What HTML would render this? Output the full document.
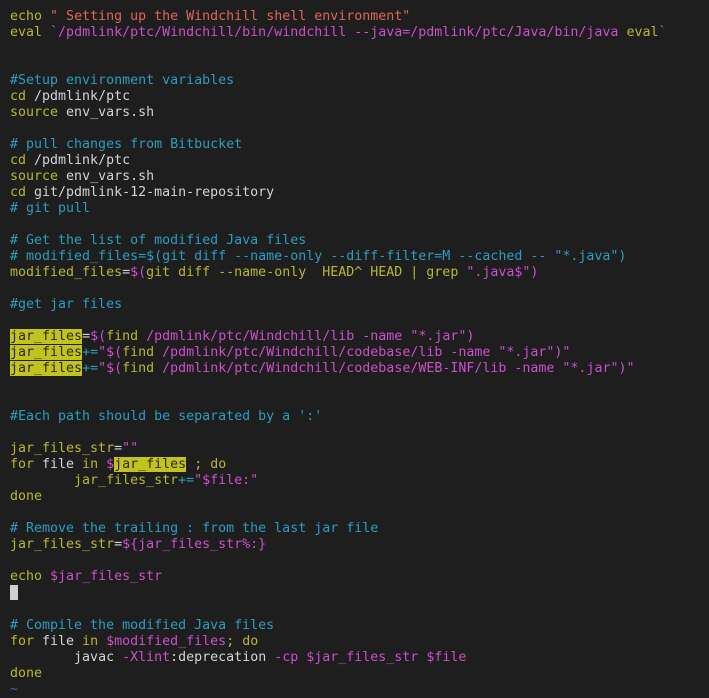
<!DOCTYPE html>
<html><head><meta charset="utf-8"><style>
html,body{margin:0;padding:0;background:#1e1e1e;width:709px;height:690px;overflow:hidden}
pre{margin:0;position:absolute;left:10px;top:9px;font-family:"DejaVu Sans Mono","Liberation Mono",monospace;font-size:13.3px;line-height:16px;color:#d4d4d4;tab-size:8}
.k{color:#b8b832}.s{color:#e0665a}.m{color:#cc4fcc}.c{color:#2b9ec0}.h{background:#c3c320;color:#2a2a10}
.cur{display:inline-block;width:8px;height:15px;background:#d0d0d0;vertical-align:-3px}
.t{color:#3b6ea5}
</style></head><body><pre><span class="k">echo</span> <span class="s">" Setting up the Windchill shell environment"</span>
<span class="k">eval</span> <span class="m">`/pdmlink/ptc/Windchill/bin/windchill --java=/pdmlink/ptc/Java/bin/java</span> <span class="k">eval</span><span class="m">`</span>


<span class="c">#Setup environment variables</span>
<span class="k">cd</span> /pdmlink/ptc
<span class="k">source</span> env_vars.sh

<span class="c"># pull changes from Bitbucket</span>
<span class="k">cd</span> /pdmlink/ptc
<span class="k">source</span> env_vars.sh
<span class="k">cd</span> git/pdmlink-12-main-repository
<span class="c"># git pull</span>

<span class="c"># Get the list of modified Java files</span>
<span class="c"># modified_files=$(git diff --name-only --diff-filter=M --cached -- "*.java")</span>
<span class="k">modified_files</span>=<span class="m">$(</span><span class="k">git diff --name-only  HEAD^ HEAD | grep </span><span class="m">".java$")</span>

<span class="c">#get jar files</span>

<span class="h">jar_files</span>=<span class="m">$(</span><span class="k">find</span> <span class="m">/pdmlink/ptc/Windchill/lib -name "*.jar")</span>
<span class="h">jar_files</span><span class="c">+=</span><span class="m">"$(</span><span class="k">find</span> <span class="m">/pdmlink/ptc/Windchill/codebase/lib -name "*.jar")"</span>
<span class="h">jar_files</span><span class="c">+=</span><span class="m">"$(</span><span class="k">find</span> <span class="m">/pdmlink/ptc/Windchill/codebase/WEB-INF/lib -name "*.jar")"</span>


<span class="c">#Each path should be separated by a ':'</span>

<span class="k">jar_files_str</span>=<span class="m">""</span>
<span class="k">for</span> file <span class="k">in</span> <span class="m">$</span><span class="h">jar_files</span> <span class="k">; do</span>
	<span class="k">jar_files_str</span><span class="c">+=</span><span class="m">"$file:"</span>
<span class="k">done</span>

<span class="c"># Remove the trailing : from the last jar file</span>
<span class="k">jar_files_str</span>=<span class="m">${jar_files_str%:}</span>

<span class="k">echo</span> <span class="m">$jar_files_str</span>
<span class="cur"></span>

<span class="c"># Compile the modified Java files</span>
<span class="k">for</span> file <span class="k">in</span> <span class="m">$modified_files</span><span class="k">; do</span>
	javac <span class="m">-Xlint</span>:deprecation <span class="m">-cp $jar_files_str $file</span>
<span class="k">done</span>
<span class="t">~</span></pre></body></html>
